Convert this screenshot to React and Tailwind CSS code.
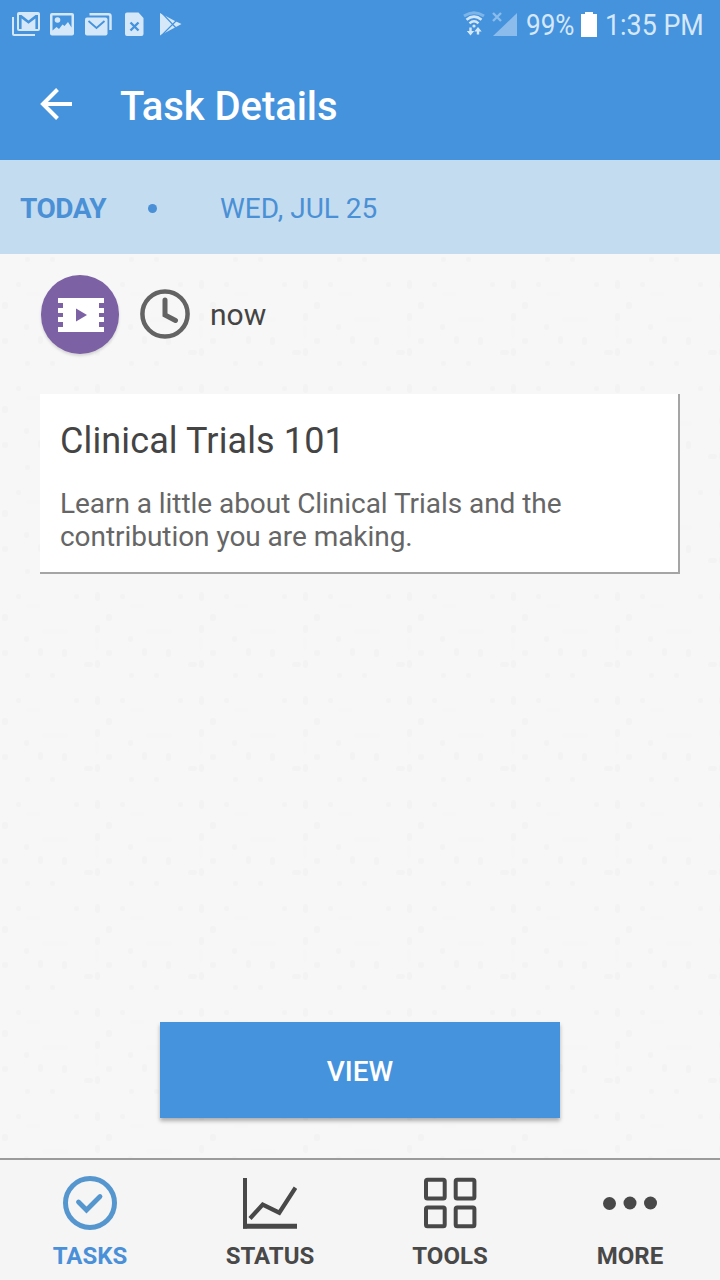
import React from "react";

// faint speckles of the paper background, one 104px tile: x, y, w, h
const SPECKS = [
  [24, 70, 5, 6], [38, 82, 5, 8], [62, 83, 5, 8], [95, 59, 5, 8],
  [95, 26, 5, 9], [2, 48, 6, 7], [2, 84, 6, 6], [95, 94, 5, 8],
  [84, 96, 9, 5], [25, 3, 5, 5], [50, 3, 5, 5], [95, 71, 4, 14],
  [74, 28, 5, 5], [16, 28, 5, 5], [26, 38, 14, 4], [42, 63, 26, 5],
];

function Paper() {
  return (
    <svg className="absolute inset-0 w-full h-full" aria-hidden="true">
      <defs>
        <pattern id="paper" width="104" height="104" patternUnits="userSpaceOnUse">
          {SPECKS.map(([x, y, w, h]) => (
            <rect key={`${x}-${y}`} x={x} y={y} width={w} height={h} rx="2" fill={w > 10 || h > 10 ? "#f6f6f6" : "#f3f3f3"} />
          ))}
        </pattern>
      </defs>
      <rect width="100%" height="100%" fill="url(#paper)" />
    </svg>
  );
}

function StatusBar() {
  return (
    <div className="flex h-12 items-center justify-between pl-3 text-[#d5e8fa]">
      <div className="flex items-center">
        <svg width="28" height="24" viewBox="0 0 28 24" fill="currentColor">
          <path d="M0 5h2v17h21v2H2a2 2 0 0 1-2-2z" />
          <path fillRule="evenodd" d="M7 0h19a2 2 0 0 1 2 2v15a2 2 0 0 1-2 2H7a2 2 0 0 1-2-2V2a2 2 0 0 1 2-2zM7 3v14h2.600V6.500l6.900 5.300 6.900-5.300V17H26V3h-2.500l-7 5.500-7-5.500z" />
        </svg>
        <svg width="24" height="24" viewBox="0 0 24 24" className="ml-2.5">
          <rect x="0" y="1" width="24" height="22.500" rx="2" fill="currentColor" />
          <path d="M2.500 3.500h19v12L18 10l-3.500 4-2-1.500L9 17l-2.500-2-4 3.500z" fill="#4593dd" />
          <circle cx="7.500" cy="8" r="2.800" fill="currentColor" />
        </svg>
        <svg width="28" height="24" viewBox="0 0 28 24" className="ml-[11px]" fill="none">
          <path d="M4.500 2.300h19a2 2 0 0 1 2 2V18" stroke="currentColor" strokeWidth="2.500" />
          <rect x="0" y="5.500" width="22.500" height="18" rx="2" fill="currentColor" />
          <path d="M3.500 9l8 7 8-7" stroke="#4593dd" strokeWidth="1.800" />
        </svg>
        <svg width="19" height="24" viewBox="0 0 19 24" className="ml-3">
          <path d="M2 0.500h11.500l5 5.500V22a2 2 0 0 1-2 2H2a2 2 0 0 1-2-2V2.500a2 2 0 0 1 2-2z" fill="currentColor" />
          <path d="M5.500 10.500l8 8m0-8l-8 8" stroke="#4593dd" strokeWidth="2.400" />
        </svg>
        <svg width="22" height="24" viewBox="0 0 22 24" className="ml-4">
          <path d="M0 1l15 8 6.500 3-6.500 3.500L0 23.500z" fill="currentColor" />
          <path d="M1 0l16 17M1 24L17 8" stroke="#4593dd" strokeWidth="1.200" />
        </svg>
      </div>
      <div className="flex items-center">
        <svg width="22" height="26" viewBox="0 0 22 26" fill="none" stroke="currentColor">
          <path d="M1 5Q11-1.500 21 5" strokeWidth="3" opacity=".4" />
          <path d="M3.500 8.700q7.500-6 15 0" strokeWidth="2.600" />
          <path d="M6.500 12.300q4.500-4 9 0" strokeWidth="2.400" />
          <circle cx="11" cy="15" r="1.600" fill="currentColor" stroke="none" />
          <path d="M7.500 16.500v5M15 23.500v-5" strokeWidth="2.400" />
          <path d="M3.800 20h7.400l-3.700 4.500zM11.300 20.500h7.400L15 16z" fill="currentColor" stroke="none" />
        </svg>
        <svg width="25" height="24" viewBox="0 0 25 24" className="ml-[7px] text-[#8bbcec]">
          <path d="M25 1v23H1z" fill="currentColor" />
          <path d="M1 1l8 8m0-8l-8 8" stroke="currentColor" strokeWidth="2.300" />
        </svg>
        <div className="ml-[9px] mt-0.5 w-[49px] whitespace-nowrap text-[30px] leading-none">
          <span className="inline-block origin-left scale-x-[.87]">99%</span>
        </div>
        <svg width="16" height="25" viewBox="0 0 16 25" className="ml-1.5 text-white">
          <path d="M4 0h8v2h4v23H0V2h4z" fill="currentColor" />
        </svg>
        <div className="ml-2 mt-0.5 w-[115px] whitespace-nowrap text-[30px] leading-none">
          <span className="inline-block origin-left scale-x-[.895]">1:35 PM</span>
        </div>
      </div>
    </div>
  );
}

function Header() {
  return (
    <header className="h-40 shrink-0 bg-[#4593dd] text-white">
      <StatusBar />
      <div className="flex h-28 items-center pl-10">
        <svg width="32" height="32" viewBox="0 0 32 32" fill="none" stroke="currentColor" strokeWidth="4">
          <path d="M32 16H3M17.500 1.500L3 16l14.500 14.500" />
        </svg>
        <h1 className="ml-12 mt-1.5 text-[40px] font-medium leading-none tracking-[-0.05px]">Task Details</h1>
      </div>
    </header>
  );
}

function DateBar() {
  return (
    <div className="flex h-[94px] shrink-0 items-center bg-[#c4dcef] pl-5 pt-1 text-[28px] text-[#4a90d6]">
      <span className="w-32 font-bold tracking-[-0.5px]">TODAY</span>
      <span className="mb-0.5 h-[9px] w-[9px] rounded-full bg-[#4a90d6]" />
      <span className="ml-[63px]">WED, JUL 25</span>
    </div>
  );
}

function TaskTime() {
  return (
    <div className="flex h-[78px] items-center pl-[41px]">
      <div className="flex h-[79px] w-[78px] items-center justify-center rounded-full bg-[#7d61a5] shadow-[0_2px_3px_rgba(0,0,0,0.14)]">
        <svg width="46" height="34" viewBox="0 0 46 34" className="ml-0.5 mt-0.5">
          <path d="M0 0h46v5h-5v5h5v5h-5v4h5v5h-5v5h5v5H0v-5h5v-5H0v-5h5v-4H0v-5h5V5H0z" fill="#fff" />
          <path d="M18 10.500v13L29 17z" fill="#7d61a5" />
        </svg>
      </div>
      <svg width="50" height="50" viewBox="0 0 50 50" className="ml-[21px]" fill="none" stroke="#636363" strokeWidth="4.500">
        <circle cx="25" cy="25" r="22.600" />
        <path d="M25 11v15l10.500 5.500" strokeWidth="5" strokeLinecap="round" />
      </svg>
      <span className="ml-5 text-[30px] text-[#444]">now</span>
    </div>
  );
}

function TaskCard() {
  return (
    <div className="mx-10 mt-[41px] h-[180px] border-b-2 border-r-2 border-[#a5a5a5] bg-white px-5 pt-[26px]">
      <h2 className="text-[36px] leading-[42px] tracking-[0.12px] text-[#444]">Clinical Trials 101</h2>
      <p className="mt-[25px] text-[28px] leading-[33px] tracking-[-0.05px] text-[#666]">
        Learn a little about Clinical Trials and the
        <br />
        contribution you are making.
      </p>
    </div>
  );
}

const TABS = [
  {
    label: "TASKS",
    active: true,
    icon: (
      <g stroke="#5596cf">
        <circle cx="27" cy="27" r="24.500" strokeWidth="5" />
        <path d="M15.500 26l8 8L37 20.500" strokeWidth="4.800" strokeLinecap="round" />
      </g>
    ),
  },
  {
    label: "STATUS",
    icon: (
      <>
        <path d="M2 2v50.500" strokeWidth="4" />
        <path d="M0 50.200h54" strokeWidth="5" />
        <path d="M7 42.500l12.700-14 16.600 8.200L52.500 11.700" strokeWidth="4.200" />
      </>
    ),
  },
  {
    label: "TOOLS",
    icon: (
      <g strokeWidth="4">
        <rect x="3" y="3.700" width="18.700" height="18.700" rx="1.500" />
        <rect x="32.700" y="3.700" width="18.700" height="18.700" rx="1.500" />
        <rect x="3" y="31.500" width="18.700" height="18.700" rx="1.500" />
        <rect x="32.700" y="31.500" width="18.700" height="18.700" rx="1.500" />
      </g>
    ),
  },
  {
    label: "MORE",
    icon: (
      <g fill="currentColor" stroke="none">
        <circle cx="6.500" cy="27.500" r="6.500" />
        <circle cx="27" cy="27" r="6.500" />
        <circle cx="47.500" cy="27" r="6.500" />
      </g>
    ),
  },
];

function TabBar() {
  return (
    <nav className="flex h-[122px] shrink-0 border-t-2 border-[#9b9b9b] bg-[#f5f5f5]">
      {TABS.map((tab) => (
        <div
          key={tab.label}
          className={`flex flex-1 flex-col items-center pt-4 ${tab.active ? "text-[#4a90d9]" : "text-[#484848]"}`}
        >
          <svg width="54" height="54" viewBox="0 0 54 54" fill="none" stroke="currentColor">
            {tab.icon}
          </svg>
          <span className="mt-3 text-[24px] font-bold leading-7">{tab.label}</span>
        </div>
      ))}
    </nav>
  );
}

export default function App() {
  return (
    <div className="flex h-[1280px] w-[720px] flex-col overflow-hidden bg-[#f7f7f7] font-['Roboto',sans-serif]">
      <Header />
      <DateBar />
      <main className="relative flex-1">
        <Paper />
        <div className="relative flex h-full flex-col pt-[21px]">
          <TaskTime />
          <TaskCard />
          <button className="mx-auto mb-10 mt-auto h-24 w-[400px] bg-[#4593dd] pt-1 text-[28px] font-medium text-white shadow-[0_3px_4px_rgba(0,0,0,0.3)]">
            VIEW
          </button>
        </div>
      </main>
      <TabBar />
    </div>
  );
}
